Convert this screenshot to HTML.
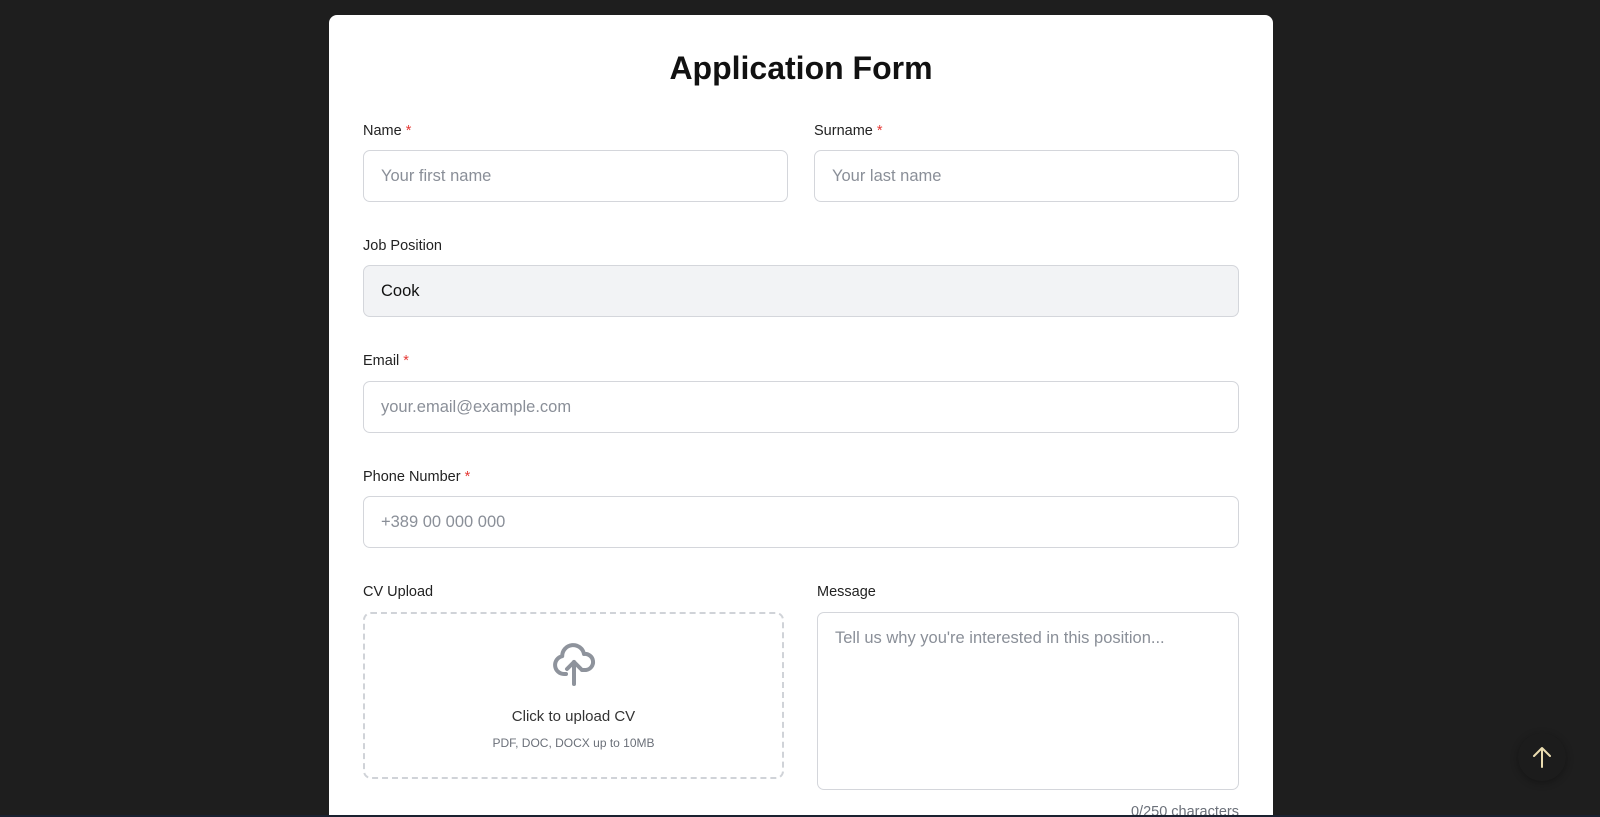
<!DOCTYPE html>
<html><head><style>
*{box-sizing:border-box;margin:0;padding:0}
html,body{width:1600px;height:817px;overflow:hidden}
body{background:#1e1e1e;font-family:"Liberation Sans",Arial,sans-serif;position:relative}
.card{position:absolute;left:329px;top:15px;width:944px;height:800px;background:#fff;border-radius:8px 8px 0 0;overflow:hidden}
h1{position:absolute;left:0;width:100%;top:35px;text-align:center;font-size:32px;font-weight:700;color:#111}
.lbl{position:absolute;font-size:14.5px;color:#222}
.lbl b{color:#e53935;font-weight:400}
.in{position:absolute;height:52px;border:1px solid #d4d6db;border-radius:7px;font-size:16.5px;color:#8a8f98;padding-left:17px;line-height:50px}
.up{position:absolute;left:34px;top:597px;width:421px;height:167px;border:2px dashed #d0d3d8;border-radius:8px;text-align:center}
.ta{position:absolute;left:488px;top:597px;width:422px;height:178px;border:1px solid #d4d6db;border-radius:7px;padding:16px 17px;font-size:16.5px;color:#8a8f98}
</style></head><body>
<div class="card">
<h1>Application Form</h1>
<div class="lbl" style="left:34px;top:108px">Name <b>*</b></div>
<div class="lbl" style="left:485px;top:108px">Surname <b>*</b></div>
<div class="in" style="left:34px;top:135px;width:425px">Your first name</div>
<div class="in" style="left:485px;top:135px;width:425px">Your last name</div>
<div class="lbl" style="left:34px;top:223px">Job Position</div>
<div class="in" style="left:34px;top:250px;width:876px;background:#f2f3f5;color:#111">Cook</div>
<div class="lbl" style="left:34px;top:338px">Email <b>*</b></div>
<div class="in" style="left:34px;top:366px;width:876px">your.email@example.com</div>
<div class="lbl" style="left:34px;top:454px">Phone Number <b>*</b></div>
<div class="in" style="left:34px;top:481px;width:876px">+389 00 000 000</div>
<div class="lbl" style="left:34px;top:569px">CV Upload</div>
<div class="lbl" style="left:488px;top:569px">Message</div>
<div class="up">
<svg width="48" height="50" viewBox="0 0 24 24" fill="none" stroke="#8e939c" stroke-width="2" stroke-linecap="round" stroke-linejoin="round" style="margin-top:25px"><path d="M8 17H7a4.5 4.5 0 0 1-.9-8.9A5.5 5.5 0 0 1 17 7a4 4 0 0 1 1 8h-2"/><path d="M12 22V11"/><path d="M8.5 14.5L12 11l3.5 3.5"/></svg>
<div style="font-size:15px;color:#333;margin-top:14px">Click to upload CV</div>
<div style="font-size:12px;color:#6b7079;margin-top:11px">PDF, DOC, DOCX up to 10MB</div>
</div>
<div class="ta">Tell us why you're interested in this position...</div>
<div style="position:absolute;right:34px;top:789px;font-size:14.5px;color:#6b7079">0/250 characters</div>
</div>
<div style="position:absolute;left:1518px;top:733px;width:48px;height:48px;border-radius:50%;background:#1c1c1c;box-shadow:0 2px 8px rgba(0,0,0,.3)">
<svg width="48" height="48" viewBox="0 0 48 48" fill="none" stroke="#eadcb0" stroke-width="2" stroke-linecap="round" stroke-linejoin="round"><path d="M24 34V15M16 23l8-8 8 8"/></svg>
</div>
<div style="position:absolute;left:0;top:815px;width:1600px;height:2px;background:#1a2130"></div>
</body></html>
